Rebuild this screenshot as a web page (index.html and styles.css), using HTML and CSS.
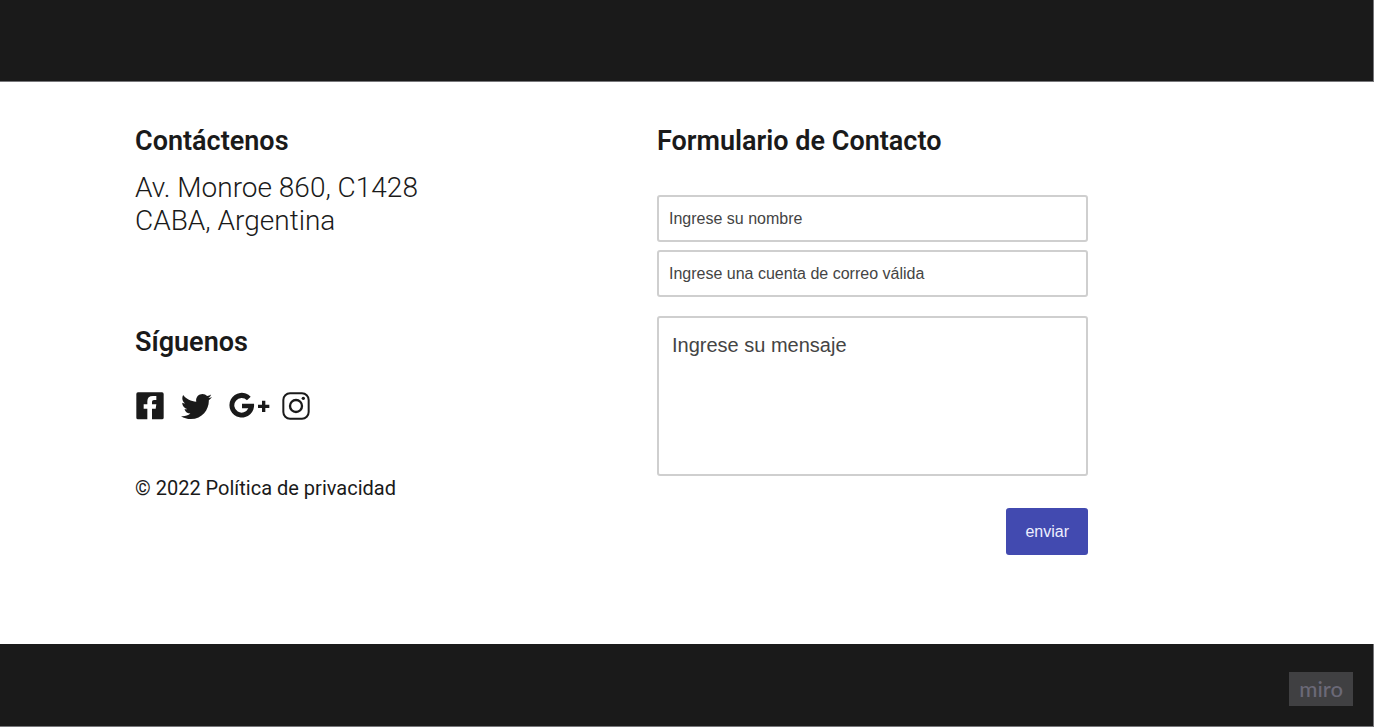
FILE: index.html
```html
<!DOCTYPE html>
<html lang="es">
<head>
<meta charset="utf-8">
<meta name="viewport" content="width=device-width, initial-scale=1">
<title>Contacto</title>
<link rel="stylesheet" href="styles.css">
</head>
<body>
<header class="bar"></header>
<main class="contact">
  <section class="info">
    <h2 class="title">Contáctenos</h2>
    <address class="address">Av. Monroe 860, C1428<br>CABA, Argentina</address>
    <h2 class="title follow">Síguenos</h2>
    <nav class="social" aria-label="Redes sociales">
      <a href="#" aria-label="Facebook"><svg width="28" height="28" viewBox="0 0 84 84"><path fill-rule="evenodd" d="M6 1H78Q83 1 83 6V77Q83 82 78 82H48V50H59L61 37H48V29Q48 24 54 24H61V12H51Q34 12 34 28V37H23V50H34V82H6Q1 82 1 77V6Q1 1 6 1Z"/></svg></a>
      <a href="#" aria-label="Twitter"><svg width="31" height="31" viewBox="0 0 512 512"><path d="M459.37 151.716c.325 4.548.325 9.097.325 13.645 0 138.72-105.583 298.558-298.558 298.558-59.452 0-114.68-17.219-161.137-47.106 8.447.974 16.568 1.299 25.34 1.299 49.055 0 94.213-16.568 130.274-44.832-46.132-.975-84.792-31.188-98.112-72.772 6.498.974 12.995 1.624 19.818 1.624 9.421 0 18.843-1.3 27.614-3.573-48.081-9.747-84.143-51.98-84.143-102.985v-1.299c13.969 7.797 30.214 12.67 47.431 13.319-28.264-18.843-46.781-51.005-46.781-87.391 0-19.492 5.197-37.36 14.294-52.954 51.655 63.675 129.3 105.258 216.365 109.807-1.624-7.797-2.599-15.918-2.599-24.04 0-57.828 46.782-104.934 104.934-104.934 30.213 0 57.502 12.67 76.67 33.137 23.715-4.548 46.456-13.32 66.599-25.34-7.798 24.366-24.366 44.833-46.132 57.827 21.117-2.273 41.584-8.122 60.426-16.243-14.292 20.791-32.161 39.308-52.628 54.253z"/></svg></a>
      <a href="#" aria-label="Google Plus"><svg width="41" height="28" viewBox="0 0 123 84"><path d="M65 14A37 37 0 1 0 75 35H39V49H58A22 22 0 1 1 54 25Z"/><path d="M99 26H109V38H121V48H109V60H99V48H87V38H99Z"/></svg></a>
      <a href="#" aria-label="Instagram"><svg width="28" height="28" viewBox="0 0 84 84"><rect class="line" x="4" y="4" width="76" height="76" rx="20"/><circle class="line ring" cx="42" cy="42" r="18"/><circle cx="64" cy="19" r="5"/></svg></a>
    </nav>
    <a class="privacy" href="#">© 2022 Política de privacidad</a>
  </section>
  <form class="form">
    <h2 class="title">Formulario de Contacto</h2>
    <input class="field first" type="text" aria-label="Nombre" placeholder="Ingrese su nombre">
    <input class="field" type="email" aria-label="Correo" placeholder="Ingrese una cuenta de correo válida">
    <textarea class="field message" aria-label="Mensaje" placeholder="Ingrese su mensaje"></textarea>
    <button class="send" type="button">enviar</button>
  </form>
</main>
<footer class="bar bottom"><span class="brand">miro</span></footer>
</body>
</html>
```
FILE: styles.css
```css
* { box-sizing: border-box; }
body {
  margin: 0;
  min-height: 100vh;
  display: flex;
  flex-direction: column;
  background: #fff;
  color: #1a1a1a;
  font-family: Roboto, sans-serif;
}
.bar {
  min-height: 82px;
  background: #1a1a1a;
  border: 0 solid #77777a;
  border-width: 0 1px 1px 0;
}
.bottom {
  min-height: 83px;
  display: flex;
  align-items: center;
  justify-content: flex-end;
  padding: 8px 20px 0 0;
}
.brand {
  padding: 0 10px;
  background: #404042;
  color: #6b6977;
  font: 500 22px/34px Lato, sans-serif;
}
.contact {
  flex: 1;
  display: grid;
  grid-template-columns: 522px minmax(0, 431px);
  align-content: start;
  padding: 43px 0 0 135px;
}
.title {
  margin: 0;
  font-size: 27px;
  line-height: 32px;
  font-weight: 600;
}
.address {
  margin-top: 14px;
  font-size: 28px;
  line-height: 33px;
  font-style: normal;
  font-weight: 300;
}
.follow { margin-top: 89px; }
.social {
  display: flex;
  align-items: center;
  height: 32px;
  gap: 17px;
  margin: 32px 0 54px 1px;
}
.social a { display: flex; }
.social a:last-child { margin-left: -5px; }
.social svg { fill: #1a1a1a; }
.social .line { fill: none; stroke: #1a1a1a; stroke-width: 6; }
.social .ring { stroke-width: 7; }
.privacy {
  color: inherit;
  text-decoration: none;
  font-size: 20px;
  line-height: 24px;
  font-weight: 400;
}
.form { display: flex; flex-direction: column; }
.field {
  width: 100%;
  height: 47px;
  margin: 0 0 8px;
  padding: 0 10px;
  border: 2px solid #cfcfcf;
  border-radius: 3px;
  background: #fff;
  color: #444;
  font: 16px/20px "Liberation Sans", Arial, sans-serif;
}
.field::placeholder { color: #444; opacity: 1; }
.first { margin-top: 38px; }
.message {
  height: 160px;
  margin: 11px 0 32px;
  padding: 15px 13px;
  font-size: 20px;
  line-height: 24px;
  resize: none;
}
.send {
  align-self: flex-end;
  padding: 0 19px;
  border: 0;
  border-radius: 3px;
  background: #424ab0;
  color: #eef;
  font: 16px/47px "Liberation Sans", Arial, sans-serif;
}
```
